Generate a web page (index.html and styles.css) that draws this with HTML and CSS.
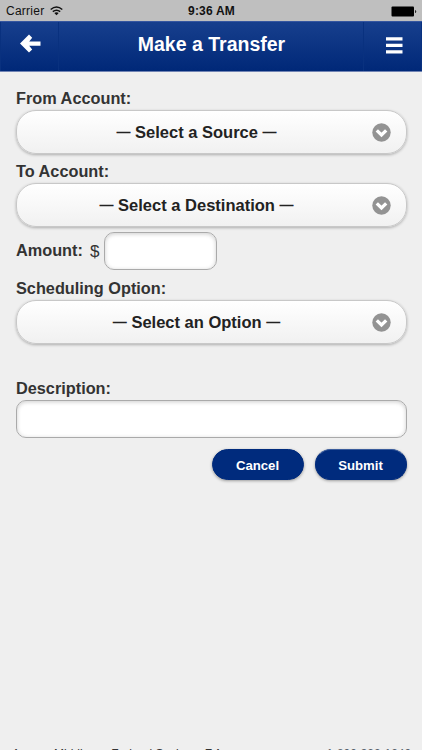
FILE: index.html
```html
<!DOCTYPE html>
<html lang="en">
<head>
<meta charset="utf-8">
<title>Make a Transfer</title>
<link rel="stylesheet" href="styles.css">
</head>
<body>
<div class="app">
  <div class="status">
    <div class="carrier"><span>Carrier</span>
      <svg width="13" height="10" viewBox="0 0 13 10" fill="none" stroke="#111" stroke-width="1.5"><path d="M.7 3.5Q6.5-1.5 12.3 3.5M2.8 5.7Q6.5 2.7 10.2 5.7"/><path d="M4.3 7Q6.5 5.3 8.7 7L6.5 9.3Z" fill="#111" stroke="none"/></svg>
    </div>
    <span class="time">9:36 AM</span>
    <svg class="battery" width="26" height="11" viewBox="0 0 26 11"><rect x=".5" y=".5" width="22.5" height="10" rx="1" fill="#000"/><path d="M24 4q1.2 0 1.2 1.5T24 7z" fill="#222"/></svg>
  </div>
  <header class="bar">
    <button class="nav back" aria-label="Back"><svg width="22" height="20" viewBox="0 0 22 20"><path d="M0 9.5L9 .5L12.2 3.7L9.2 7.4H20.5V11.8H9.2L12.2 15.4L9 18.6Z" fill="#fff"/></svg></button>
    <h1>Make a Transfer</h1>
    <button class="nav menu" aria-label="Menu"><svg width="17" height="17" viewBox="0 0 17 17" fill="#fff"><path d="M0 .3h16.5v3.2H0zM0 6.8h16.5V10H0zM0 13.2h16.5v3.2H0z"/></svg></button>
  </header>
  <main>
    <label class="from">From Account:</label>
    <div class="select"><span class="value"><i>—</i> Select a Source <i>—</i></span><svg class="chev" width="19" height="19" viewBox="0 0 19 19"><circle cx="9.5" cy="9.5" r="9.2" fill="#939393"/><path d="M4.8 7.3L9.5 12L14.2 7.3" fill="none" stroke="#fff" stroke-width="3.3"/></svg></div>
    <label class="to">To Account:</label>
    <div class="select"><span class="value"><i>—</i> Select a Destination <i>—</i></span><svg class="chev" width="19" height="19" viewBox="0 0 19 19"><circle cx="9.5" cy="9.5" r="9.2" fill="#939393"/><path d="M4.8 7.3L9.5 12L14.2 7.3" fill="none" stroke="#fff" stroke-width="3.3"/></svg></div>
    <div class="amount"><label class="amt">Amount:</label><span class="dollar">$</span><input class="field small" aria-label="Amount"></div>
    <label class="sched">Scheduling Option:</label>
    <div class="select"><span class="value"><i>—</i> Select an Option <i>—</i></span><svg class="chev" width="19" height="19" viewBox="0 0 19 19"><circle cx="9.5" cy="9.5" r="9.2" fill="#939393"/><path d="M4.8 7.3L9.5 12L14.2 7.3" fill="none" stroke="#fff" stroke-width="3.3"/></svg></div>
    <label class="desc">Description:</label>
    <input class="field" aria-label="Description">
    <div class="actions"><button>Cancel</button><button class="submit">Submit</button></div>
  </main>
  <footer><span class="bank">Access Middlesex Federal Savings, F.A.</span><span class="phone">1-800-322-1240</span></footer>
</div>
</body>
</html>
```

FILE: styles.css
```css
* { box-sizing: border-box; }
html, body { margin: 0; overflow: hidden; }
body { background: #efefef; font-family: "Liberation Sans", Arial, sans-serif; color: #333; }
button, input { font: inherit; margin: 0; }
svg { display: block; }
.app { width: 422px; height: 750px; overflow: hidden; display: flex; flex-direction: column; }
.status { flex: none; height: 21px; background: #bfbfbf; display: grid; grid-template-columns: 1fr auto 1fr; align-items: center; padding: 1px 5px 0 6px; color: #111; font-size: 12px; }
.carrier { display: flex; align-items: center; gap: 6px; letter-spacing: .25px; }
.carrier svg { margin-top: -1px; }
.time { font-weight: bold; font-size: 12px; letter-spacing: .2px; }
.battery { justify-self: end; }
.bar { flex: none; height: 51px; background: linear-gradient(#173f8d, #002878); border-top: 1px solid #3556a0; border-bottom: 1px solid #7184b4; display: grid; grid-template-columns: 59px 1fr 59px; color: #fff; }
.bar h1 { margin: 0; padding-left: 1px; font-size: 19.5px; line-height: 45px; text-align: center; }
.nav { border: 0; padding: 0; background: transparent; display: flex; justify-content: center; }
.back { border-right: 1px solid #09317f; border-left: 1px solid #09317f; padding: 12px 0 0 2px; }
.menu { padding: 15px 0 0 3px; border-left: 1px solid #09317f; border-right: 1px solid #09317f; }
main { flex: 1; padding: 16px 15.5px 0; }
main label { display: block; height: 22px; line-height: 21px; font-size: 16.3px; font-weight: bold; margin-left: .5px; }
.select { height: 44px; border: 1px solid #c8c8c8; border-radius: 20px; background: linear-gradient(#fff, #f1f1f1); box-shadow: 0 1px 3px rgba(0,0,0,.28); display: grid; grid-template-columns: 360px 1fr; align-items: center; color: #222; font-size: 16.5px; font-weight: bold; text-align: center; }
.value { padding-top: 1px; white-space: nowrap; }
.value i { display: inline-block; width: 14px; font-style: normal; font-size: 14px; position: relative; top: -1px; }
main .to { height: 29px; line-height: 35px; }
.chev { margin-left: -4.5px; }
.amount { display: flex; align-items: center; height: 38px; margin-top: 5px; }
.dollar { font-size: 17px; margin: 1px 5px 0 7px; }
.field { display: block; width: 100%; height: 38px; border: 1px solid #aaa; border-radius: 10px; background: #fff; box-shadow: inset 0 1px 4px rgba(0,0,0,.2); }
.small { width: 113px; }
main .sched { height: 30px; line-height: 37px; }
main .desc { height: 56px; line-height: 33px; padding-top: 28px; }
.actions { display: flex; justify-content: flex-end; gap: 11px; margin-top: 11px; }
.actions button { width: 92px; height: 31px; border: 1px solid #002b7d; border-radius: 16px; background: #002b7d; color: #fff; font-size: 13.2px; font-weight: bold; padding: 1px 0 0; box-shadow: 0 1px 3px rgba(0,0,0,.35); }
.actions .submit { border-top-color: #3b5d9d; }
footer { flex: none; height: 4px; padding: 0 11px 0 12px; display: flex; justify-content: space-between; font-size: 12px; line-height: 17px; }
footer span { height: 17px; white-space: nowrap; }
.phone { color: #58626c; font-size: 11.9px; }
```
